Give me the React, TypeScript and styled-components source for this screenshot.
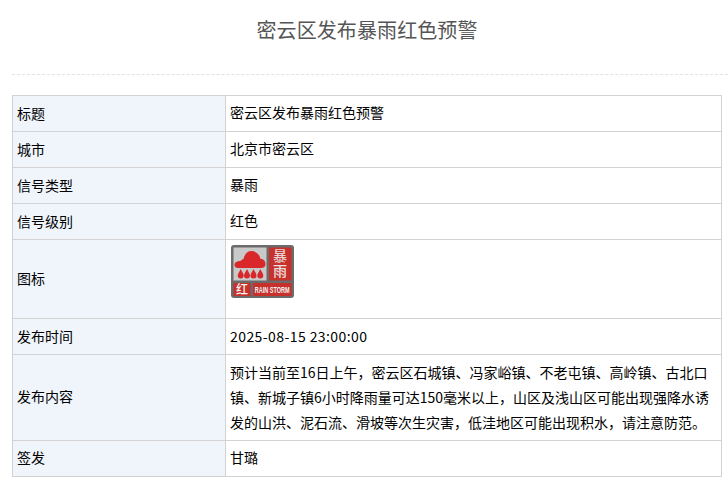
import React from "react";
import styled, { createGlobalStyle } from "styled-components";

const Global = createGlobalStyle`
  html, body { margin: 0; padding: 0; background: #fff; }
  body { font-family: "Noto Sans CJK SC", "Liberation Sans", sans-serif; }
`;

const Page = styled.div`
  width: 728px;
  height: 481px;
  overflow: hidden;
  box-sizing: border-box;
  padding-left: 12px;
`;

const Header = styled.header`
  height: 75px;
  box-sizing: border-box;
  border-bottom: 1px dashed #e2e2e2;
  margin-bottom: 20px;
  padding-top: 14px;
  text-align: center;
`;

const Title = styled.h1`
  margin: 0;
  font-size: 20px;
  line-height: 32px;
  font-weight: 400;
  color: #555;
  padding-right: 6px;
  letter-spacing: 0.1px;
`;

const Table = styled.table`
  width: 710px;
  border-collapse: collapse;
  table-layout: fixed;
  font-size: 14px;
  color: #000;
`;

const Label = styled.th`
  width: 213px;
  box-sizing: border-box;
  border: 1px solid #d2d2d2;
  background: #f0f5fc;
  padding: 0 4px 2px;
  font-weight: 400;
  text-align: left;
`;

const Value = styled.td`
  border: 1px solid #d2d2d2;
  padding: 0 4px 2px;
  line-height: 25.2px;
  height: 35px;
  box-sizing: border-box;
  vertical-align: middle;
`;

const IconCell = styled(Value)`
  padding: 5px 4px 20px 5px;
  line-height: 0;
`;

const ContentCell = styled(Value)`
  padding: 5px 4px 4px;
`;

const DateCell = styled(Value)`
  padding: 0 4px;
`;

const DateText = styled.span`
  letter-spacing: 0.42px;
`;

const Row = styled.tr`
  height: 36px;
`;

function RainIcon() {
  const drops = [9.7, 16, 22.5, 29.3];
  return (
    <svg width="63" height="53" viewBox="0 0 63 53" style={{ display: "block" }}>
      <rect x="0" y="0" width="63" height="53" rx="3" fill="#6b6b6b" />
      <rect x="2.5" y="2.5" width="33" height="33" fill="#c9c9c9" />
      <rect x="38" y="2.5" width="22.5" height="33" fill="#c8302c" />
      <rect x="2.5" y="38" width="17" height="13" fill="#c8302c" />
      <rect x="22" y="38" width="38.5" height="13" fill="#c8302c" />
      <path
        d="M3.5 20c0-3 3-4 6-4 1-1 2-2 3-2 1-5 4-8 8-8 4 0 8 3 9 8 3 0 5 2 5 5 0 3-2 4-5 4H7c-2 0-3.500-1-3.500-3z"
        fill="#d8282a"
      />
      {drops.map((x) => (
        <path
          key={x}
          d={`M${x - 3} 30.500c0-2 2-4 3-6.500 1 2.500 3 4.500 3 6.500 0 2-1 3-3 3s-3-1-3-3z`}
          fill="#d8282a"
        />
      ))}
      <text x="49" y="16" textAnchor="middle" fontSize="14" fontWeight="500" fill="#e4d4d4" fontFamily="Noto Sans CJK SC, sans-serif">暴</text>
      <text x="49" y="31" textAnchor="middle" fontSize="14" fontWeight="500" fill="#e8e0e0" fontFamily="Noto Sans CJK SC, sans-serif">雨</text>
      <text x="11" y="49" textAnchor="middle" fontSize="12" fontWeight="500" fill="#f2f2f2" fontFamily="Noto Sans CJK SC, sans-serif">红</text>
      <text transform="translate(41.2 47.8) scale(.65 1)" textAnchor="middle" fontSize="8.500" fontWeight="700" fill="#f2f2f2" fontFamily="Liberation Sans, sans-serif">RAIN STORM</text>
    </svg>
  );
}

export default function App() {
  return (
    <Page>
      <Global />
      <Header>
        <Title>密云区发布暴雨红色预警</Title>
      </Header>
      <Table>
        <tbody>
          <Row><Label>标题</Label><Value>密云区发布暴雨红色预警</Value></Row>
          <Row><Label>城市</Label><Value>北京市密云区</Value></Row>
          <Row><Label>信号类型</Label><Value>暴雨</Value></Row>
          <Row><Label>信号级别</Label><Value>红色</Value></Row>
          <tr><Label>图标</Label><IconCell><RainIcon /></IconCell></tr>
          <Row><Label>发布时间</Label><DateCell><DateText>2025-08-15 23:00:00</DateText></DateCell></Row>
          <tr>
            <Label>发布内容</Label>
            <ContentCell>预计当前至16日上午，密云区石城镇、冯家峪镇、不老屯镇、高岭镇、古北口镇、新城子镇6小时降雨量可达150毫米以上，山区及浅山区可能出现强降水诱发的山洪、泥石流、滑坡等次生灾害，低洼地区可能出现积水，请注意防范。</ContentCell>
          </tr>
          <Row><Label>签发</Label><Value>甘璐</Value></Row>
        </tbody>
      </Table>
    </Page>
  );
}
